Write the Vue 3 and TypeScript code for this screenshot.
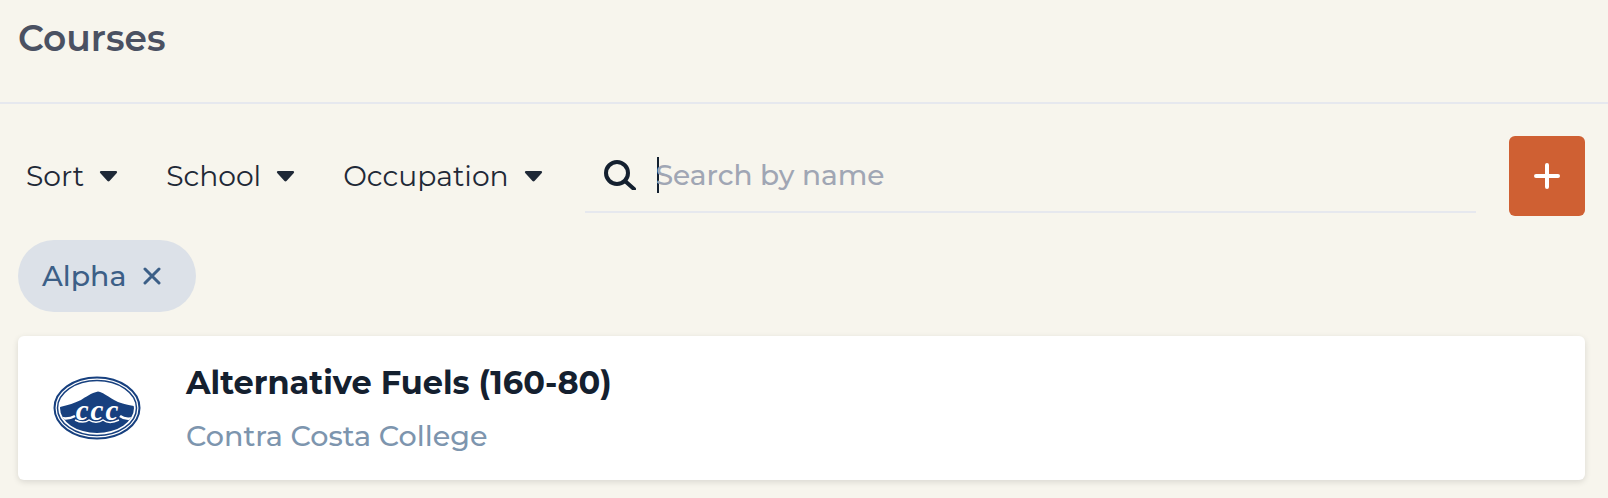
<script setup lang="ts">
const filters = ['Sort', 'School', 'Occupation']
</script>

<template>
  <div class="page">
    <header class="page-header">
      <h1>Courses</h1>
    </header>

    <div class="toolbar">
      <div class="filters">
        <button v-for="name in filters" :key="name" class="filter">
          {{ name }}
          <svg class="caret" viewBox="0 0 19 13" width="19" height="13">
            <path d="M2 1h15c1 0 1.500 1.200.8 2l-7.300 8c-.5.6-1.500.6-2 0L1.200 3C.5 2.200 1 1 2 1z" fill="#1f2937" />
          </svg>
        </button>
      </div>
      <div class="search">
        <svg class="search-icon" viewBox="0 0 32 30" width="32" height="30" fill="none" stroke="#14202f" stroke-width="4" stroke-linecap="round">
          <circle cx="13" cy="13" r="11" />
          <path d="M21 21l9 8" />
        </svg>
        <span class="cursor"></span>
        <input type="text" placeholder="Search by name" />
      </div>
      <button class="add" aria-label="Add">
        <svg viewBox="0 0 26 26" width="26" height="26" fill="none" stroke="#fff" stroke-width="4" stroke-linecap="round">
          <path d="M13 2v22M2 13h22" />
        </svg>
      </button>
    </div>

    <div class="tags">
      <span class="tag">
        Alpha
        <svg viewBox="0 0 18 18" width="18" height="18" fill="none" stroke="#3c5f87" stroke-width="3" stroke-linecap="round">
          <path d="M2 2l14 14M16 2L2 16" />
        </svg>
      </span>
    </div>

    <article class="card">
      <div class="logo">
        <svg viewBox="0 0 88 64" width="88" height="64">
          <defs>
            <clipPath id="logo-inner">
              <ellipse cx="44" cy="32" rx="37" ry="25" />
            </clipPath>
          </defs>
          <ellipse cx="44" cy="32" rx="42.500" ry="30.500" fill="#fff" stroke="#17407f" stroke-width="2" />
          <ellipse cx="44" cy="32" rx="39.500" ry="27.500" fill="#fff" stroke="#17407f" stroke-width="1.500" />
          <g clip-path="url(#logo-inner)">
            <path d="M0 33L7 31C15 29 22 27 28 24C33 21 38 17 45 15.500C48 16 50 17 52 18.500C57 21 60 24 65 26C70 28 75 29 88 31V64H0Z" fill="#17407f" />
            <path d="M0 39C8 43 15 44 22 40M67 40C72 44 80 43 88 39" fill="none" stroke="#fff" stroke-width="2.500" />
            <path d="M22 44C28 47 32 47 36 44C40 47 46 47 50 44C54 47 60 47 66 44" fill="none" stroke="#fff" stroke-width="1.500" />
          </g>
          <text x="45" y="44" text-anchor="middle" class="logo-text">ccc</text>
        </svg>
      </div>
      <div class="info">
        <h2>Alternative Fuels (160-80)</h2>
        <p>Contra Costa College</p>
      </div>
    </article>
  </div>
</template>

<style>
html, body {
  margin: 0;
  background: #f7f5ed;
}
</style>

<style scoped>
.page {
  height: 498px;
  overflow: hidden;
  font-family: Montserrat, "Open Sans", "Noto Sans", sans-serif;
  background: #f7f5ed;
}

.page-header {
  height: 104px;
  box-sizing: border-box;
  padding: 18px 18px 0;
  border-bottom: 2px solid #e6e8ee;
}

.page-header h1 {
  margin: 0;
  font-size: 36px;
  line-height: 40px;
  font-weight: 600;
  color: #4a5162;
}

.toolbar {
  display: flex;
  align-items: flex-start;
  margin-top: 32px;
  padding: 0 23px 0 26px;
}

.filters {
  display: flex;
  gap: 48px;
  padding-top: 21px;
  width: 559px;
}

.filter {
  display: flex;
  align-items: center;
  gap: 15px;
  padding: 0;
  border: 0;
  background: none;
  font: inherit;
  font-size: 28.200px;
  line-height: 38px;
  color: #1f2937;
}

.search {
  display: flex;
  align-items: center;
  width: 892px;
  height: 77px;
  box-sizing: border-box;
  padding: 2px 0 0 19px;
  border-bottom: 2px solid #e6e8ee;
}

.search-icon {
  margin-right: 21px;
}

.cursor {
  width: 2px;
  height: 36px;
  margin-right: -3px;
  background: #14202f;
}

.search input {
  flex: 1;
  border: 0;
  outline: 0;
  padding: 0;
  background: none;
  font: inherit;
  font-size: 28px;
  font-weight: 500;
}

.search input::placeholder {
  color: #a0a6b4;
}

.add {
  display: flex;
  align-items: center;
  justify-content: center;
  width: 76px;
  height: 80px;
  margin-left: 33px;
  padding: 0;
  border: 0;
  border-radius: 6px;
  background: #cf6033;
}

.tags {
  margin-top: 24px;
  padding-left: 18px;
}

.tag {
  display: inline-flex;
  align-items: center;
  gap: 17px;
  width: 178px;
  height: 72px;
  box-sizing: border-box;
  padding-left: 24px;
  border-radius: 36px;
  background: #dce1e8;
  font-size: 28.400px;
  font-weight: 500;
  color: #3c5f87;
}

.card {
  display: flex;
  align-items: center;
  height: 144px;
  box-sizing: border-box;
  margin: 24px 23px 0 18px;
  border-radius: 6px;
  background: #fff;
  box-shadow: 0 2px 6px rgba(0, 0, 0, 0.12);
}

.logo {
  display: flex;
  width: 168px;
  padding-left: 35px;
  box-sizing: border-box;
}

.logo-text {
  font-family: "Liberation Serif", serif;
  font-style: italic;
  font-weight: 700;
  font-size: 29px;
  letter-spacing: 2px;
  fill: #fff;
}

.info h2 {
  margin: 0;
  font-size: 32px;
  line-height: 40px;
  font-weight: 700;
  color: #14202f;
}

.info p {
  margin: 15px 0 0;
  font-size: 28.600px;
  line-height: 36px;
  font-weight: 500;
  color: #7d95ae;
}
</style>
